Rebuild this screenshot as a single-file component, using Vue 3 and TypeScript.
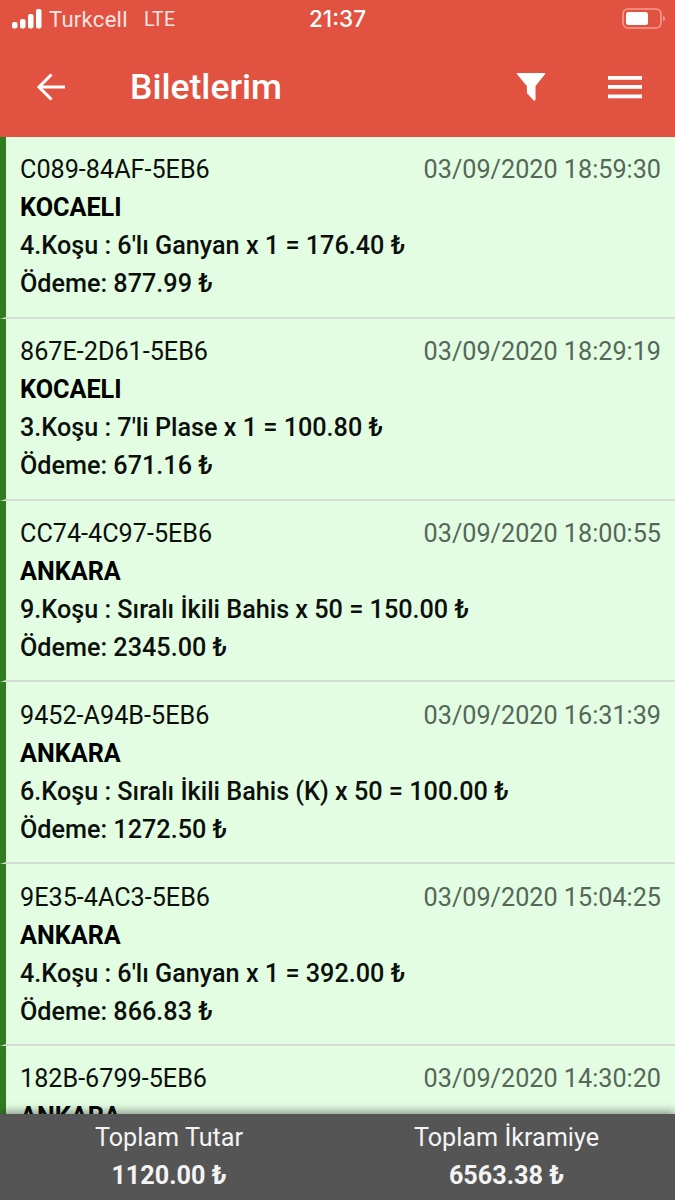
<script setup lang="ts">
interface Ticket {
  code: string
  date: string
  city: string
  race: string
  pay: string
}
const tickets: Ticket[] = [
  { code: 'C089-84AF-5EB6', date: '03/09/2020 18:59:30', city: 'KOCAELI', race: "4.Koşu : 6'lı Ganyan x 1 = 176.40 ₺", pay: 'Ödeme: 877.99 ₺' },
  { code: '867E-2D61-5EB6', date: '03/09/2020 18:29:19', city: 'KOCAELI', race: "3.Koşu : 7'li Plase x 1 = 100.80 ₺", pay: 'Ödeme: 671.16 ₺' },
  { code: 'CC74-4C97-5EB6', date: '03/09/2020 18:00:55', city: 'ANKARA', race: '9.Koşu : Sıralı İkili Bahis x 50 = 150.00 ₺', pay: 'Ödeme: 2345.00 ₺' },
  { code: '9452-A94B-5EB6', date: '03/09/2020 16:31:39', city: 'ANKARA', race: '6.Koşu : Sıralı İkili Bahis (K) x 50 = 100.00 ₺', pay: 'Ödeme: 1272.50 ₺' },
  { code: '9E35-4AC3-5EB6', date: '03/09/2020 15:04:25', city: 'ANKARA', race: "4.Koşu : 6'lı Ganyan x 1 = 392.00 ₺", pay: 'Ödeme: 866.83 ₺' },
  { code: '182B-6799-5EB6', date: '03/09/2020 14:30:20', city: 'ANKARA', race: '', pay: '' },
]
</script>

<template>
  <div class="page">
    <header class="header">
      <div class="status">
        <div class="status-left">
          <svg class="signal" width="30" height="20" viewBox="0 0 30 20" aria-hidden="true">
            <rect x="0" y="13" width="5.500" height="6.500" rx="2" fill="#fff" />
            <rect x="8" y="10" width="5.500" height="9.500" rx="2" fill="#fff" />
            <rect x="16" y="5" width="5.500" height="14.500" rx="2" fill="#fff" />
            <rect x="24" y="0" width="5.500" height="19.500" rx="2" fill="#fff" />
          </svg>
          <span class="carrier">Turkcell</span>
          <span class="carrier lte">LTE</span>
        </div>
        <span class="clock">21:37</span>
        <svg class="battery" width="44" height="22" viewBox="0 0 44 22" aria-hidden="true">
          <rect x="1" y="1" width="38" height="19" rx="5" fill="none" stroke="#f59c90" stroke-width="1.6" />
          <rect x="4" y="4" width="22" height="13" rx="2.500" fill="#fff" />
          <path d="M41 8c1.600.4 2 1.400 2 2.500s-.4 2.100-2 2.500z" fill="#f59c90" />
        </svg>
      </div>
      <div class="toolbar">
        <div class="toolbar-left">
          <svg class="back" width="30" height="30" viewBox="0 0 30 30" aria-hidden="true">
            <path d="M29 15H3M15.500 2.500 3 15l12.500 12.500" fill="none" stroke="#fff" stroke-width="3" />
          </svg>
          <h1 class="title">Biletlerim</h1>
        </div>
        <div class="toolbar-right">
          <svg class="filter" width="30" height="30" viewBox="0 0 30 30" aria-hidden="true">
            <path d="M1.500 1h27c.7 0 1 .7.500 1.200L19.500 14v13.500c0 1.200-1.300 1.600-2 .8l-6-6.500c-.4-.4-.6-.8-.6-1.300V14L1 2.200C.5 1.700.8 1 1.500 1z" fill="#fff" />
          </svg>
          <svg class="menu" width="34" height="24" viewBox="0 0 34 24" aria-hidden="true">
            <rect x="0" y="1" width="34" height="3.800" fill="#fff" />
            <rect x="0" y="10" width="34" height="3.800" fill="#fff" />
            <rect x="0" y="19.500" width="34" height="3.800" fill="#fff" />
          </svg>
        </div>
      </div>
    </header>

    <main class="list">
      <article v-for="t in tickets" :key="t.code" class="ticket">
        <div class="line top">
          <span>{{ t.code }}</span>
          <span class="date">{{ t.date }}</span>
        </div>
        <div class="line city">{{ t.city }}</div>
        <div v-if="t.race" class="line strong">{{ t.race }}</div>
        <div v-if="t.pay" class="line strong">{{ t.pay }}</div>
      </article>
    </main>

    <footer class="footer">
      <div class="total">
        <span class="label">Toplam Tutar</span>
        <strong class="value">1120.00 ₺</strong>
      </div>
      <div class="total">
        <span class="label">Toplam İkramiye</span>
        <strong class="value">6563.38 ₺</strong>
      </div>
    </footer>
  </div>
</template>

<style>
html,
body {
  margin: 0;
  background: #fff;
}
</style>

<style scoped>
.page {
  width: 675px;
  height: 1200px;
  display: flex;
  flex-direction: column;
  overflow: hidden;
  font-family: Roboto, "Liberation Sans", sans-serif;
  color: #0c0f0c;
}
.header {
  height: 137px;
  flex: none;
  box-sizing: border-box;
  background: #e25241;
  color: #fff;
  display: flex;
  flex-direction: column;
}
.status {
  height: 38px;
  padding: 0 9px 0 12px;
  display: flex;
  align-items: center;
  justify-content: space-between;
  position: relative;
}
.status-left {
  display: flex;
  align-items: center;
}
.signal {
  margin-right: 7px;
}
.carrier {
  font-family: Roboto, sans-serif;
  font-size: 22px;
  color: #fbe5e2;
  letter-spacing: 0.3px;
}
.lte {
  margin-left: 16px;
  font-size: 19.500px;
}
.clock {
  position: absolute;
  left: 309px;
  top: 6px;
  font-family: Inter, Roboto, sans-serif;
  font-size: 22.500px;
  font-weight: 500;
  line-height: 26px;
}
.toolbar {
  flex: 1;
  padding: 0 33px 2px 36px;
  display: flex;
  align-items: center;
  justify-content: space-between;
}
.toolbar-left,
.toolbar-right {
  display: flex;
  align-items: center;
}
.title {
  margin: 0 0 0 64px;
  font-size: 35.500px;
  line-height: 40px;
  font-weight: 500;
}
.toolbar-right {
  gap: 62px;
}
.list {
  flex: 1;
  min-height: 0;
  overflow: hidden;
  background: #e2fde1;
}
.ticket {
  height: 181.800px;
  box-sizing: border-box;
  padding: 14.400px 14px 0;
  border-left: 6px solid #2e7d20;
  border-bottom: 2px solid #d4dcd4;
}
.line {
  height: 38px;
  line-height: 38px;
  font-size: 25.200px;
  white-space: nowrap;
}
.top {
  display: flex;
  justify-content: space-between;
}
.date {
  color: #56665a;
}
.city {
  font-weight: 700;
  color: #000;
}
.strong {
  font-weight: 500;
}
.footer {
  height: 86px;
  flex: none;
  background: #555;
  color: #f4f4f4;
  display: grid;
  grid-template-columns: 338px 337px;
  box-shadow: 0 -3px 8px rgba(40, 40, 40, 0.45);
  position: relative;
}
.total {
  display: flex;
  flex-direction: column;
  align-items: center;
  padding-top: 5px;
}
.label {
  font-size: 25.200px;
  line-height: 38px;
}
.value {
  font-size: 25.200px;
  line-height: 38px;
  font-weight: 700;
}
</style>
